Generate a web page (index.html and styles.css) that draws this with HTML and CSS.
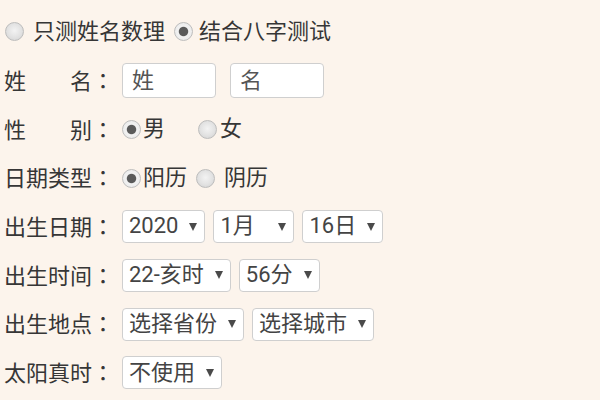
FILE: index.html
```html
<!DOCTYPE html>
<html lang="zh-CN">
<head>
<meta charset="utf-8">
<title>姓名测试</title>
<link rel="stylesheet" href="styles.css">
</head>
<body>
<form class="form">
  <div class="row">
    <input type="radio" class="radio first" name="mode">
    <span class="opt-a">只测姓名数理</span>
    <input type="radio" class="radio second" name="mode" checked>
    <span class="opt-b">结合八字测试</span>
  </div>
  <div class="row">
    <span class="label">姓　　名<span class="colon" lang="zh-TW">：</span></span>
    <input type="text" class="text" placeholder="姓">
    <input type="text" class="text gap" placeholder="名">
  </div>
  <div class="row">
    <span class="label">性　　别<span class="colon" lang="zh-TW">：</span></span>
    <input type="radio" class="radio" name="sex" checked>
    <span class="after">男</span>
    <input type="radio" class="radio sex-f" name="sex">
    <span class="after-f">女</span>
  </div>
  <div class="row">
    <span class="label">日期类型<span class="colon" lang="zh-TW">：</span></span>
    <input type="radio" class="radio" name="cal" checked>
    <span class="after">阳历</span>
    <input type="radio" class="radio cal-y" name="cal">
    <span class="after-y">阴历</span>
  </div>
  <div class="row">
    <span class="label">出生日期<span class="colon" lang="zh-TW">：</span></span>
    <div class="sel"><span>2020</span><i class="arrow"></i></div>
    <div class="sel month"><span>1月</span><i class="arrow"></i></div>
    <div class="sel"><span>16日</span><i class="arrow"></i></div>
  </div>
  <div class="row">
    <span class="label">出生时间<span class="colon" lang="zh-TW">：</span></span>
    <div class="sel"><span>22-亥时</span><i class="arrow"></i></div>
    <div class="sel"><span>56分</span><i class="arrow"></i></div>
  </div>
  <div class="row">
    <span class="label">出生地点<span class="colon" lang="zh-TW">：</span></span>
    <div class="sel"><span>选择省份</span><i class="arrow"></i></div>
    <div class="sel"><span>选择城市</span><i class="arrow"></i></div>
  </div>
  <div class="row">
    <span class="label">太阳真时<span class="colon" lang="zh-TW">：</span></span>
    <div class="sel"><span>不使用</span><i class="arrow"></i></div>
  </div>
</form>
</body>
</html>
```

FILE: styles.css
```css
html, body {
  margin: 0;
  padding: 0;
  background: #fcf4ec;
}
body {
  font-family: Roboto, "Noto Sans CJK SC", sans-serif;
  font-size: 22px;
  color: #363636;
}
.form {
  padding: 7.6px 0 0 4px;
  margin: 0;
}
.row {
  display: flex;
  align-items: center;
  height: 48.7px;
  line-height: 1.2;
}
.label {
  width: 110px;
  margin-right: 8px;
  white-space: nowrap;
}
.colon {
  font-family: "Noto Sans CJK TC", "Noto Sans CJK JP", sans-serif;
}
.radio {
  appearance: none;
  -webkit-appearance: none;
  box-sizing: border-box;
  width: 19px;
  height: 19px;
  margin: 0;
  border-radius: 50%;
  border: 1px solid #bdbdbd;
  background: radial-gradient(circle at 50% 45%, #f3f3f3 0, #e2e2e2 55%, #cfcfcf 100%);
  flex: none;
}
.radio:checked {
  background: radial-gradient(circle, #5a5a5a 0, #5a5a5a 4.2px, #f2f2f2 5.2px, #e6e6e6 100%);
}
.radio.first { margin-left: 1px; }
.opt-a { margin-left: 9px; }
.radio.second { margin-left: 9px; }
.opt-b { margin-left: 6px; }
.after { margin-left: 2px; }
.radio.sex-f { margin-left: 33px; }
.after-f { margin-left: 3px; }
.radio.cal-y { margin-left: 9px; }
.after-y { margin-left: 9px; }
.text {
  box-sizing: border-box;
  width: 94px;
  height: 35px;
  margin: 0;
  padding: 0 9px;
  border: 1px solid #cfcfcf;
  border-radius: 4px;
  background: #fff;
  font: inherit;
  color: #555;
  outline: none;
}
.text::placeholder {
  color: #555;
}
.text.gap { margin-left: 14px; }
.sel {
  box-sizing: border-box;
  display: inline-flex;
  align-items: center;
  height: 33px;
  padding: 0 7px 0 6px;
  gap: 11px;
  border: 1px solid #cfcfcf;
  border-radius: 4px;
  background: #fff;
  color: #444;
  margin-right: 8px;
  white-space: nowrap;
}
.sel.month {
  width: 81px;
  justify-content: space-between;
}
.arrow {
  width: 0;
  height: 0;
  border-left: 4px solid transparent;
  border-right: 4px solid transparent;
  border-top: 8px solid #4a4a4a;
  flex: none;
}
```
